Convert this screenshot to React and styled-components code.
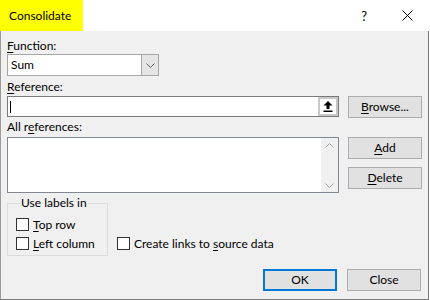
import React from "react";
import styled, { createGlobalStyle } from "styled-components";

const Global = createGlobalStyle`
  html, body { margin: 0; padding: 0; background: #ffffff; }
  body { font-family: Lato, "Noto Sans", Arial, sans-serif; font-size: 12px; color: #000; }
  * { box-sizing: border-box; }
`;

const Dialog = styled.div`
  width: 430px;
  height: 300px;
  display: flex;
  flex-direction: column;
  background: #ffffff;
`;

const TitleBar = styled.div`
  height: 31px;
  display: flex;
  align-items: stretch;
  background: #ffffff;
  flex-shrink: 0;
`;

const TitleText = styled.div`
  background: #ffff00;
  width: 83px;
  padding-left: 9px;
  display: flex;
  align-items: center;
  font-size: 12px;
  line-height: 16px;
`;

const TitleSpacer = styled.div`
  flex: 1;
`;

const TitleButtons = styled.div`
  display: flex;
  align-items: center;
  gap: 35px;
  padding-right: 17px;
`;

const Help = styled.span`
  font-size: 13px;
  line-height: 16px;
`;

const Body = styled.div`
  flex: 1;
  width: 429px;
  background: #f0f0f0;
  border-left: 1px solid #9a9a9a;
  border-right: 1px solid #7a7a7a;
  border-bottom: 1px solid #7a7a7a;
  padding: 7px 6px 0 6px;
  display: flex;
  flex-direction: column;
`;

const Label = styled.div`
  line-height: 16px;
  height: 16px;
  margin-top: ${(p) => p.$mt || 0}px;
  margin-bottom: ${(p) => p.$mb || 0}px;
`;

const U = styled.span`
  text-decoration: underline;
  text-underline-offset: 2px;
`;

const Select = styled.div`
  width: 152px;
  height: 22px;
  display: flex;
  background: #ffffff;
  border: 1px solid #a6a6a6;
`;

const SelectValue = styled.div`
  flex: 1;
  padding-left: 3px;
  line-height: 20px;
`;

const SelectArrow = styled.div`
  width: 17px;
  background: #e5e5e5;
  border-left: 1px solid #a6a6a6;
  display: flex;
  align-items: center;
  justify-content: center;
`;

const Row = styled.div`
  display: flex;
  gap: 9px;
  align-items: flex-start;
`;

const TextInput = styled.div`
  width: 332px;
  height: 21px;
  background: #ffffff;
  border: 1px solid #7a7a7a;
  display: flex;
  align-items: center;
  justify-content: space-between;
`;

const Caret = styled.div`
  width: 1px;
  height: 12px;
  background: #000;
  margin-left: 2px;
`;

const CollapseButton = styled.div`
  width: 20px;
  height: 19px;
  background: #ffffff;
  border: 2px solid #c8c8c8;
  display: flex;
  align-items: center;
  justify-content: center;
`;

const Button = styled.div`
  width: 74px;
  height: ${(p) => p.$h || 22}px;
  background: #e1e1e1;
  border: ${(p) => (p.$default ? "2px solid #0078d7" : "1px solid #adadad")};
  display: flex;
  align-items: center;
  justify-content: center;
  line-height: 16px;
`;

const ListBox = styled.div`
  width: 332px;
  height: 56px;
  background: #ffffff;
  border: 1px solid #828790;
  display: flex;
  justify-content: flex-end;
`;

const ScrollBar = styled.div`
  width: 17px;
  background: #f0f0f0;
  display: flex;
  flex-direction: column;
  justify-content: space-between;
  align-items: center;
  padding: 5px 0 4px;
`;

const ButtonColumn = styled.div`
  display: flex;
  flex-direction: column;
  gap: 8px;
`;

const BottomRow = styled.div`
  display: flex;
  align-items: flex-end;
  gap: 9px;
  margin-top: 2px;
`;

const GroupBox = styled.fieldset`
  width: 101px;
  margin: 0;
  padding: 4px 0 2px 8px;
  border: 1px solid #dcdcdc;
  display: flex;
  flex-direction: column;
`;

const Legend = styled.legend`
  padding: 0 1px;
  margin-left: 4px;
  line-height: 16px;
`;

const CheckRow = styled.label`
  display: flex;
  align-items: center;
  gap: 4px;
  height: 19px;
  line-height: 16px;
  margin-bottom: ${(p) => p.$mb || 0}px;
`;

const Box = styled.span`
  width: 13px;
  height: 13px;
  background: #ffffff;
  border: 1px solid #333333;
  flex-shrink: 0;
`;

const Footer = styled.div`
  display: flex;
  justify-content: flex-end;
  gap: 10px;
  margin-top: 13px;
  padding-right: 1px;
`;

const Chevron = ({ up, color = "#606060" }) => (
  <svg width="9" height="5" viewBox="0 0 9 5">
    <polyline
      points={up ? "0.5,4.5 4.5,0.5 8.5,4.5" : "0.5,0.5 4.5,4.5 8.5,0.5"}
      fill="none"
      stroke={color}
      strokeWidth="1"
    />
  </svg>
);

export default function App() {
  return (
    <>
      <Global />
      <Dialog>
        <TitleBar>
          <TitleText>Consolidate</TitleText>
          <TitleSpacer />
          <TitleButtons>
            <Help>?</Help>
            <svg width="11" height="11" viewBox="0 0 11 11">
              <path d="M0.5 0.5 L10.5 10.5 M10.5 0.5 L0.5 10.5" stroke="#000" strokeWidth="1" />
            </svg>
          </TitleButtons>
        </TitleBar>
        <Body>
          <Label>
            <U>F</U>unction:
          </Label>
          <Select>
            <SelectValue>Sum</SelectValue>
            <SelectArrow>
              <Chevron />
            </SelectArrow>
          </Select>
          <Label $mt={3} $mb={1}>
            <U>R</U>eference:
          </Label>
          <Row>
            <TextInput>
              <Caret />
              <CollapseButton>
                <svg width="10" height="11" viewBox="0 0 10 11">
                  <path d="M5 0 L9.5 4.5 L6.5 4.5 L6.5 8 L3.5 8 L3.5 4.5 L0.5 4.5 Z" fill="#000" />
                  <rect x="0.5" y="9.5" width="9" height="1.5" fill="#000" />
                </svg>
              </CollapseButton>
            </TextInput>
            <Button $h={22}>
              <span>
                <U>B</U>rowse...
              </span>
            </Button>
          </Row>
          <Label $mt={1} $mb={2}>
            All r<U>e</U>ferences:
          </Label>
          <Row>
            <ListBox>
              <ScrollBar>
                <Chevron up color="#a8a8a8" />
                <Chevron color="#a8a8a8" />
              </ScrollBar>
            </ListBox>
            <ButtonColumn>
              <Button>
                <span>
                  <U>A</U>dd
                </span>
              </Button>
              <Button>
                <span>
                  <U>D</U>elete
                </span>
              </Button>
            </ButtonColumn>
          </Row>
          <BottomRow>
            <GroupBox>
              <Legend>Use labels in</Legend>
              <CheckRow>
                <Box />
                <span>
                  <U>T</U>op row
                </span>
              </CheckRow>
              <CheckRow>
                <Box />
                <span>
                  <U>L</U>eft column
                </span>
              </CheckRow>
            </GroupBox>
            <CheckRow $mb={3}>
              <Box />
              <span>
                Create links to <U>s</U>ource data
              </span>
            </CheckRow>
          </BottomRow>
          <Footer>
            <Button $default>OK</Button>
            <Button>Close</Button>
          </Footer>
        </Body>
      </Dialog>
    </>
  );
}
